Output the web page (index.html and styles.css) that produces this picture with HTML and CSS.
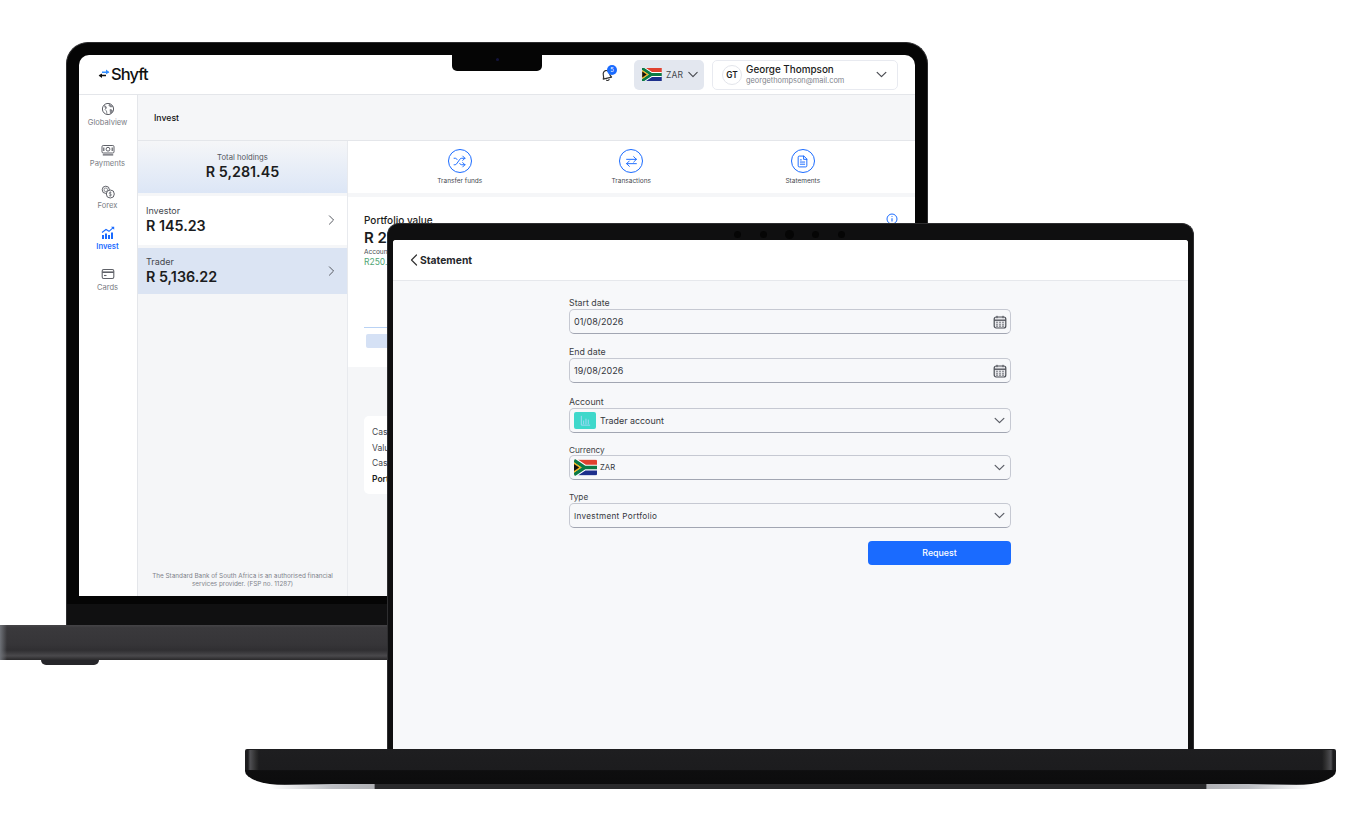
FILE: index.html
```html
<!DOCTYPE html>
<html lang="en">
<head>
<meta charset="utf-8">
<title>Shyft</title>
<link rel="stylesheet" href="styles.css">
</head>
<body>
<svg class="defs" width="0" height="0" aria-hidden="true">
  <defs>
    <symbol id="chev" viewBox="0 0 12 8"><path d="M1 1.5l5 5 5-5" fill="none" stroke="currentColor" stroke-width="1.4" stroke-linecap="round" stroke-linejoin="round"/></symbol>
    <symbol id="chev-r" viewBox="0 0 8 12"><path d="M1.5 1l5 5-5 5" fill="none" stroke="currentColor" stroke-width="1.2" stroke-linecap="round" stroke-linejoin="round"/></symbol>
    <symbol id="flag" viewBox="0 0 30 20">
      <rect width="30" height="10" fill="#e0412f"/>
      <rect y="10" width="30" height="10" fill="#1c2f8c"/>
      <path d="M-1 0L14 10L-1 20M14 10H30" fill="none" stroke="#fff" stroke-width="7.5"/>
      <path d="M-1 0L14 10L-1 20M14 10H30" fill="none" stroke="#0b7a45" stroke-width="4.6"/>
      <path d="M0 3.2L10 10L0 16.8Z" fill="#f3b61f"/>
      <path d="M0 5.5L6.8 10L0 14.5Z" fill="#111"/>
    </symbol>
    <symbol id="cal" viewBox="0 0 14 14">
      <rect x="1.2" y="2" width="11.6" height="11" rx="2" fill="#e9eaed" stroke="#4c4f56" stroke-width="1.2"/>
      <path d="M1.2 5.2h11.6" stroke="#4c4f56" stroke-width="1.3"/>
      <path d="M4 .8v2.4M10 .8v2.4" stroke="#4c4f56" stroke-width="1"/>
      <path d="M3.3 7.300h1.400M6.300 7.300h1.400M9.300 7.300h1.400M3.300 9.200h1.400M6.300 9.200h1.400M9.300 9.200h1.400M3.300 11.100h1.400M6.300 11.100h1.400M9.300 11.100h1.400" stroke="#4c4f56" stroke-width="1.100"/>
    </symbol>
  </defs>
</svg>

<main class="stage">
  <!-- Back laptop -->
  <section class="mac">
    <div class="mac-lid">
      <div class="mac-screen">
        <span class="notch"><i class="notch-cam"></i></span>
        <header class="top">
          <div class="logo">
            <svg class="logo-mark" viewBox="0 0 12 10"><path d="M4 3.2h6.5" stroke="#2f8cff" stroke-width="1.5"/><path d="M8 .6l3.4 2.6L8 5.2z" fill="#2f8cff"/><path d="M8 6.6H1.6" stroke="#111" stroke-width="1.5"/><path d="M4 4.4L.6 6.6 4 9z" fill="#111"/></svg>
            <span class="logo-text">Shyft</span>
          </div>
          <div class="top-right">
            <div class="bell">
              <svg class="bell-icon" viewBox="0 0 14 14"><path d="M3 10.500c.9-1 1-2 1-3.700C4 4.800 5.300 3.300 7 3.300s3 1.500 3 3.500c0 1.700.1 2.700 1 3.700zM5.800 12.200c.7.600 1.700.600 2.400 0" transform="rotate(-14 7 7)" fill="none" stroke="#333" stroke-width="1.100" stroke-linejoin="round" stroke-linecap="round"/></svg>
              <span class="bell-badge">5</span>
            </div>
            <div class="cur-pill">
              <svg class="cur-flag"><use href="#flag"/></svg>
              <span class="cur-name">ZAR</span>
              <svg class="cur-chev"><use href="#chev"/></svg>
            </div>
            <div class="user">
              <span class="avatar">GT</span>
              <div class="user-text">
                <span class="user-name">George Thompson</span>
                <span class="user-mail">georgethompson@mail.com</span>
              </div>
              <svg class="user-chev"><use href="#chev"/></svg>
            </div>
          </div>
        </header>
        <div class="app">
          <nav class="side">
            <a class="side-item">
              <svg class="side-icon" viewBox="0 0 14 14" fill="none" stroke="#5f6168" stroke-width="1"><circle cx="7" cy="7" r="5.600"/><path d="M3 3.500l2 1 .5 1.500L4 7.500l1.500 1.500L6 12M8.500 1.800L8 3.500l1.500 1.500 2.500-.5M9 7.500l2 .5.500 1.500L9.500 11.500z" fill="#8b8d93" stroke-width=".6"/></svg>
              <span>Globalview</span>
            </a>
            <a class="side-item">
              <svg class="side-icon" viewBox="0 0 14 14" fill="none" stroke="#5f6168" stroke-width="1"><rect x="1" y="2.500" width="12" height="7.500" rx="1.200"/><circle cx="7" cy="6.200" r="1.900"/><path d="M1.800 11.800h10.400" stroke-width="1.300"/><path d="M2.800 4.500v3.400M11.200 4.500v3.400" stroke-width="1.200"/></svg>
              <span>Payments</span>
            </a>
            <a class="side-item">
              <svg class="side-icon" viewBox="0 0 14 14" fill="none" stroke="#5f6168" stroke-width="1"><circle cx="4.800" cy="4.800" r="3.600"/><circle cx="4.800" cy="4.800" r="1.800" stroke-width=".7"/><circle cx="9.300" cy="9" r="4" fill="#fff"/><path d="M10.400 7.600c-.4-.4-2.200-.6-2.200.6s2.300.6 2.300 1.700-1.900 1-2.400.5M9.300 6.400v5.200" stroke-width=".7"/></svg>
              <span>Forex</span>
            </a>
            <a class="side-item side-item-on">
              <svg class="side-icon" viewBox="0 0 14 14" fill="#1a6bff"><rect x="1" y="9" width="2" height="4"/><rect x="4" y="7.500" width="2" height="5.500"/><rect x="7" y="9" width="2" height="4"/><rect x="10" y="6.500" width="2" height="6.500"/><path d="M1 6.500L5 3.500l3 1.800L12.500 1.300" fill="none" stroke="#1a6bff" stroke-width="1.100"/><path d="M10 .8h3.200v3z"/></svg>
              <span>Invest</span>
            </a>
            <a class="side-item">
              <svg class="side-icon" viewBox="0 0 14 14" fill="none" stroke="#5f6168" stroke-width="1.100"><rect x="1.200" y="2.500" width="11.600" height="9" rx="1.500"/><path d="M1.200 5.200h11.600" stroke-width="1.600"/><path d="M3 8.500h2.500"/></svg>
              <span>Cards</span>
            </a>
          </nav>
          <div class="main">
            <div class="crumb">Invest</div>
            <div class="cols">
              <aside class="accts">
                <div class="total">
                  <span class="total-label">Total holdings</span>
                  <strong class="total-val">R 5,281.45</strong>
                </div>
                <div class="acct acct-first">
                  <div><span class="acct-name">Investor</span><strong class="acct-val">R 145.23</strong></div>
                  <svg class="acct-chev"><use href="#chev-r"/></svg>
                </div>
                <div class="acct acct-on">
                  <div><span class="acct-name">Trader</span><strong class="acct-val">R 5,136.22</strong></div>
                  <svg class="acct-chev"><use href="#chev-r"/></svg>
                </div>
                <p class="legal">The Standard Bank of South Africa is an authorised financial services provider. (FSP no. 11287)</p>
              </aside>
              <div class="detail">
                <div class="actions">
                  <div class="action">
                    <span class="action-ring"><svg viewBox="0 0 24 24" fill="none" stroke="#1a6bff" stroke-width="1.800" stroke-linecap="round" stroke-linejoin="round"><path d="M2 18h1.400c1.300 0 2.500-.6 3.300-1.700l6.100-8.600c.7-1.100 2-1.700 3.300-1.700H22"/><path d="m18 2 4 4-4 4"/><path d="M2 6h1.900c1.500 0 2.900.9 3.600 2.200"/><path d="M22 18h-5.900c-1.300 0-2.600-.7-3.300-1.800l-.5-.8"/><path d="m18 14 4 4-4 4"/></svg></span>
                    <span class="action-label">Transfer funds</span>
                  </div>
                  <div class="action">
                    <span class="action-ring"><svg viewBox="0 0 24 24" fill="none" stroke="#1a6bff" stroke-width="1.800" stroke-linecap="round" stroke-linejoin="round"><path d="M3 8h18"/><path d="m16 3 5 5-5 5"/><path d="M21 16H3"/><path d="m8 11-5 5 5 5"/></svg></span>
                    <span class="action-label">Transactions</span>
                  </div>
                  <div class="action">
                    <span class="action-ring"><svg viewBox="0 0 24 24" fill="none" stroke="#1a6bff" stroke-width="1.800" stroke-linecap="round" stroke-linejoin="round"><path d="M14 2H6a2 2 0 0 0-2 2v16a2 2 0 0 0 2 2h12a2 2 0 0 0 2-2V8z"/><path d="M14 2v6h6"/><path d="M8 13h8M8 17h8M8 9h2"/></svg></span>
                    <span class="action-label">Statements</span>
                  </div>
                </div>
                <div class="port">
                  <div class="port-head">
                    <span class="port-title">Portfolio value</span>
                    <svg class="port-info" viewBox="0 0 12 12" fill="none" stroke="#1a6bff"><circle cx="6" cy="6" r="5"/><path d="M6 5.300v3.200M6 3.200v.9" stroke-width="1.100"/></svg>
                  </div>
                  <strong class="port-val">R 250.00</strong>
                  <span class="port-sub">Account value</span>
                  <span class="port-gain">R250.00</span>
                  <div class="tabs"><span class="tab"></span></div>
                </div>
                <div class="summary">
                  <div class="sum-row">Cash</div>
                  <div class="sum-row">Value</div>
                  <div class="sum-row">Cash</div>
                  <div class="sum-row sum-total">Portfolio</div>
                </div>
              </div>
            </div>
          </div>
        </div>
      </div>
    </div>
    <div class="mac-base"></div>
    <div class="mac-foot"></div>
  </section>

  <!-- Front laptop -->
  <section class="book">
    <div class="book-lid">
      <div class="book-cams"><i class="cam"></i><i class="cam"></i><i class="cam cam-lg"></i><i class="cam"></i><i class="cam"></i></div>
      <div class="book-screen">
        <header class="st-head">
          <svg class="st-back" viewBox="0 0 8 12"><path d="M6.500 1l-5 5 5 5" fill="none" stroke="#333" stroke-width="1.200" stroke-linecap="round" stroke-linejoin="round"/></svg>
          <span class="st-title">Statement</span>
        </header>
        <form class="form">
          <div class="field">
            <label class="field-label">Start date</label>
            <div class="input"><span class="input-val">01/08/2026</span><svg class="input-cal"><use href="#cal"/></svg></div>
          </div>
          <div class="field">
            <label class="field-label">End date</label>
            <div class="input"><span class="input-val">19/08/2026</span><svg class="input-cal"><use href="#cal"/></svg></div>
          </div>
          <div class="field field-acct">
            <label class="field-label">Account</label>
            <div class="input input-icon">
              <span class="acct-tile"><svg viewBox="0 0 14 14" fill="none" stroke="#a8d8f8" stroke-width="1"><path d="M2.500 2v10h9.500"/><path d="M5 11V7M7.500 11V5M10 11V6"/></svg></span>
              <span class="input-val input-val-wide">Trader account</span>
              <svg class="input-chev"><use href="#chev"/></svg>
            </div>
          </div>
          <div class="field field-sm">
            <label class="field-label field-label-sm">Currency</label>
            <div class="input input-icon">
              <svg class="input-flag"><use href="#flag"/></svg>
              <span class="input-val input-val-sm">ZAR</span>
              <svg class="input-chev"><use href="#chev"/></svg>
            </div>
          </div>
          <div class="field field-type">
            <label class="field-label field-label-sm">Type</label>
            <div class="input">
              <span class="input-val input-val-type">Investment Portfolio</span>
              <svg class="input-chev"><use href="#chev"/></svg>
            </div>
          </div>
          <div class="form-foot"><button class="btn" type="button">Request</button></div>
        </form>
      </div>
    </div>
    <div class="book-base"></div>
    <div class="book-lip"></div>
  </section>
</main>
</body>
</html>
```

FILE: styles.css
```css
* { box-sizing: border-box; }
html, body { margin: 0; padding: 0; background: #fff; }
body { font-family: Inter, "Liberation Sans", sans-serif; color: #1b1c20; overflow: hidden; }
.defs { position: absolute; }
.stage { position: relative; width: 1358px; height: 824px; overflow: hidden; background: #fff; }

/* Back laptop */
.mac { position: absolute; left: 0; top: 0; width: 1000px; height: 670px; }
.mac-lid { position: absolute; left: 66px; top: 42px; width: 862px; height: 584px; padding: 12px 12px 30px; background: #050505; border: 1px solid #2c2c2e; border-bottom: 0; border-radius: 22px 22px 0 0; box-shadow: inset 0 -22px 0 #101011; }
.mac-screen { position: relative; height: 100%; background: #fff; border-radius: 10px 10px 0 0; overflow: hidden; display: flex; flex-direction: column; }
.notch { position: absolute; left: 373px; top: 0; width: 90px; height: 16px; background: #050505; border-radius: 0 0 5px 5px; }
.notch-cam { display: block; width: 3px; height: 3px; margin: 3px auto 0; border-radius: 50%; background: #14143c; }
.mac-base { position: absolute; left: 0; top: 625px; width: 1000px; height: 35px; background: linear-gradient(180deg, #454447 0, #3a393c 8%, #363538 55%, #302f32 72%, #4a494c 88%, #29282a 100%); border-radius: 0 0 4px 0; }
.mac-base::before { content: ""; display: block; width: 7px; height: 100%; background: linear-gradient(90deg, #6e7177, rgba(122, 125, 131, 0)); }
.mac-foot { position: absolute; left: 41px; top: 660px; width: 58px; height: 5px; background: #26262a; border-radius: 0 0 14px 14px; }

.top { height: 40px; flex: none; display: flex; align-items: center; justify-content: space-between; padding: 0 17px 0 19px; border-bottom: 1px solid #e4e6ea; }
.logo { display: flex; align-items: center; gap: 1px; margin-top: -1px; }
.logo-mark { width: 12px; height: 10px; }
.logo-text { font-size: 16.500px; font-weight: 500; letter-spacing: -.9px; color: #111; }
.top-right { display: flex; align-items: center; }
.bell { position: relative; width: 15px; height: 15px; margin-right: 20px; }
.bell-icon { display: block; width: 15px; height: 15px; }
.bell-badge { position: absolute; left: 8px; top: -2px; width: 10px; height: 10px; border-radius: 50%; background: #1a6bff; color: #fff; font-size: 6px; line-height: 10px; text-align: center; }
.cur-pill { width: 70px; height: 30px; background: #e3e7ef; border-radius: 5px; display: flex; align-items: center; padding-left: 8px; margin-right: 8px; color: #44474e; }
.cur-flag { width: 20px; height: 13px; }
.cur-name { font-size: 8.500px; margin-left: 4px; letter-spacing: .1px; }
.cur-chev { width: 10px; height: 7px; margin-left: 5px; color: #4a4c52; }
.user { width: 186px; height: 30px; border: 1px solid #e8eaf0; border-radius: 5px; display: flex; align-items: center; padding-left: 9px; }
.avatar { width: 20px; height: 20px; flex: none; border: 1px solid #e3e5eb; border-radius: 50%; font-size: 8.300px; font-weight: 600; line-height: 18px; text-align: center; }
.user-text { display: flex; flex-direction: column; margin-left: 4px; width: 130px; }
.user-name { font-size: 9.900px; font-weight: 500; line-height: 12px; white-space: nowrap; }
.user-mail { font-size: 7.400px; line-height: 11px; color: #80838b; white-space: nowrap; }
.user-chev { width: 11px; height: 7px; margin-left: 0; color: #4a4c52; }

.app { flex: 1; display: flex; min-height: 0; }
.side { width: 59px; flex: none; background: #fff; border-right: 1px solid #e4e6ea; padding-top: 7px; display: flex; flex-direction: column; }
.side-item { height: 41.300px; flex: none; display: flex; flex-direction: column; align-items: center; font-size: 7.600px; color: #7b7e85; line-height: 10px; margin-left: -1px; }
.side-icon { width: 14px; height: 14px; margin-bottom: 2px; flex: none; }
.side-item-on { color: #1a6bff; font-weight: 600; }
.main { flex: 1; display: flex; flex-direction: column; min-width: 0; background: #f5f6f8; }
.crumb { height: 46px; flex: none; padding: 0 16px; font-size: 8.700px; font-weight: 500; line-height: 47px; border-bottom: 1px solid #e4e6ea; color: #111; }
.cols { flex: 1; display: flex; min-height: 0; }
.accts { width: 210px; flex: none; display: flex; flex-direction: column; border-right: 1px solid #e8eaee; background: #f5f6f8; }
.total { height: 52px; flex: none; display: flex; flex-direction: column; align-items: center; justify-content: center; padding-bottom: 1px; background: linear-gradient(180deg, #f5f6f8 0, #dce6f6 100%); margin-bottom: 3px; }
.total-label { font-size: 7.700px; line-height: 11px; color: #55585f; }
.total-val { font-size: 14.300px; line-height: 18px; font-weight: 600; }
.acct { height: 49px; flex: none; display: flex; align-items: center; justify-content: space-between; padding: 0 12px 0 8px; background: #fff; margin-bottom: 3px; }
.acct-first { padding-bottom: 2px; }
.acct-on { height: 46px; background: #dbe4f3; margin-bottom: 0; }
.acct-name { display: block; font-size: 9px; line-height: 12px; color: #44474e; }
.acct-val { display: block; font-size: 14.300px; line-height: 18px; font-weight: 600; }
.acct-chev { width: 7px; height: 10px; color: #55585f; }
.legal { margin: auto 10px 8px; font-size: 6.350px; line-height: 7.500px; color: #80838b; text-align: center; }
.detail { flex: 1; min-width: 0; display: flex; flex-direction: column; }
.actions { height: 52px; flex: none; background: #fff; margin-bottom: 4px; display: grid; grid-template-columns: repeat(3, 171.500px); padding-left: 26px; }
.action { display: flex; flex-direction: column; align-items: center; padding-top: 8px; }
.action-ring { width: 24px; height: 24px; border: 1px solid #1a6bff; border-radius: 50%; display: flex; align-items: center; justify-content: center; margin-bottom: 4px; }
.action-ring svg { width: 13px; height: 13px; }
.action-label { font-size: 6.500px; line-height: 9px; color: #44474e; }
.port { height: 170px; flex: none; background: #fff; padding: 15px 17px 0 16px; }
.port-head { display: flex; justify-content: space-between; align-items: center; height: 14px; }
.port-title { font-size: 10px; font-weight: 500; margin-top: 1px; }
.port-info { width: 12px; height: 12px; }
.port-val { display: block; font-size: 15px; line-height: 20px; font-weight: 600; margin-top: 2px; }
.port-sub { display: block; font-size: 6.500px; line-height: 9px; color: #44474e; }
.port-gain { display: block; font-size: 8.500px; line-height: 11px; color: #4fa574; }
.tabs { margin-top: 59px; border-top: 1px solid #b9d2f4; padding: 6px 2px 0; }
.tab { display: block; width: 180px; height: 14px; background: #d5e1f5; border-radius: 2px; }
.summary { margin: 49px 16px 0; height: 78px; background: #fff; border-radius: 5px; padding: 9px 8px; }
.sum-row { font-size: 8.500px; line-height: 15.600px; color: #44474e; }
.sum-total { font-weight: 600; color: #1b1c20; }

/* Front laptop */
.book { position: absolute; left: 245px; top: 223px; width: 1091px; height: 570px; }
.book-lid { position: absolute; left: 142px; top: 0; width: 807px; height: 526px; padding: 16px 5px 0; background: #0f0f10; border: 1px solid #2e2e30; border-bottom: 0; border-radius: 12px 12px 0 0; }
.book-cams { position: absolute; left: 346px; top: 6px; display: flex; align-items: center; gap: 19px; }
.cam { display: block; width: 7px; height: 7px; border-radius: 50%; background: #050505; }
.cam-lg { width: 9px; height: 9px; margin: 0 -1px; }
.book-screen { height: 100%; background: #f7f8fa; border-radius: 3px 3px 0 0; overflow: hidden; display: flex; flex-direction: column; }
.st-head { height: 41px; flex: none; background: #fff; border-bottom: 1px solid #e6e8ec; display: flex; align-items: center; padding-left: 17px; gap: 2px; }
.st-back { width: 8px; height: 12px; }
.st-title { font-size: 10.300px; font-weight: 700; color: #26282c; }
.form { width: 442px; margin: 16px auto 0 176px; display: flex; flex-direction: column; gap: 12px; }
.field-label { display: block; height: 12px; font-size: 8.800px; line-height: 12px; color: #3c3f45; }
.field-label-sm { font-size: 8.200px; line-height: 10px; }
.field-acct { margin-top: 1px; }
.field-sm .field-label { height: 10px; }
.field-type .field-label { height: 11px; }
.input { height: 25px; display: flex; align-items: center; justify-content: space-between; padding: 0 3px 0 4px; border: 1.500px solid #c6c9d2; border-bottom-color: #a2a6b2; border-radius: 5px; background: #f7f8fa; }
.input-icon { justify-content: flex-start; }
.input-val { font-size: 9px; color: #33363c; }
.input-val-wide { font-size: 8.900px; margin-left: 4px; }
.input-val-sm { font-size: 7.700px; }
.input-val-type { font-size: 8.200px; letter-spacing: .3px; }
.input-icon .input-val-sm { margin-left: 3px; }
.input-cal { width: 14px; height: 14px; }
.input-chev { width: 11px; height: 7px; color: #5a5d65; margin-right: 2px; }
.input-icon .input-chev { margin-left: auto; }
.acct-tile { width: 22px; height: 17px; border-radius: 2px; background: #3fd8cb; display: flex; align-items: center; justify-content: center; }
.acct-tile svg { width: 13px; height: 13px; }
.input-flag { width: 23px; height: 17px; border-radius: 2px; overflow: hidden; }
.form-foot { display: flex; justify-content: flex-end; margin-top: 1px; }
.btn { width: 143px; height: 24px; padding: 0 0 1px; border: 0; border-radius: 4px; background: #1a6bff; color: #fff; font-family: inherit; font-size: 8.800px; font-weight: 500; }
.book-base { position: absolute; left: 0; top: 526px; width: 1091px; height: 36px; background: linear-gradient(180deg, #1e1e20 0, #1c1c1e 58%, #0e0e0f 60%, #0c0c0d 100%); border-radius: 2px 2px 40px 40px / 2px 2px 14px 14px; }
.book-base::before { content: ""; position: absolute; inset: 1px 0 15px; border-radius: 2px; background: linear-gradient(90deg, transparent 3px, #66666a 5px, #333 11px, transparent 14px, transparent calc(100% - 14px), #333 calc(100% - 11px), #66666a calc(100% - 5px), transparent calc(100% - 3px)); opacity: .7; }
.book-lip { position: absolute; left: 25px; top: 561px; width: 1041px; height: 5px; background: linear-gradient(90deg, rgba(190,192,198,0) 0, #bcbec3 6%, #b0b1b5 10%, #2a2a2c 10.100%, #2a2a2c 89.900%, #b0b1b5 90%, #bcbec3 94%, rgba(190,192,198,0) 100%); border-radius: 0 0 6px 6px; }
```
